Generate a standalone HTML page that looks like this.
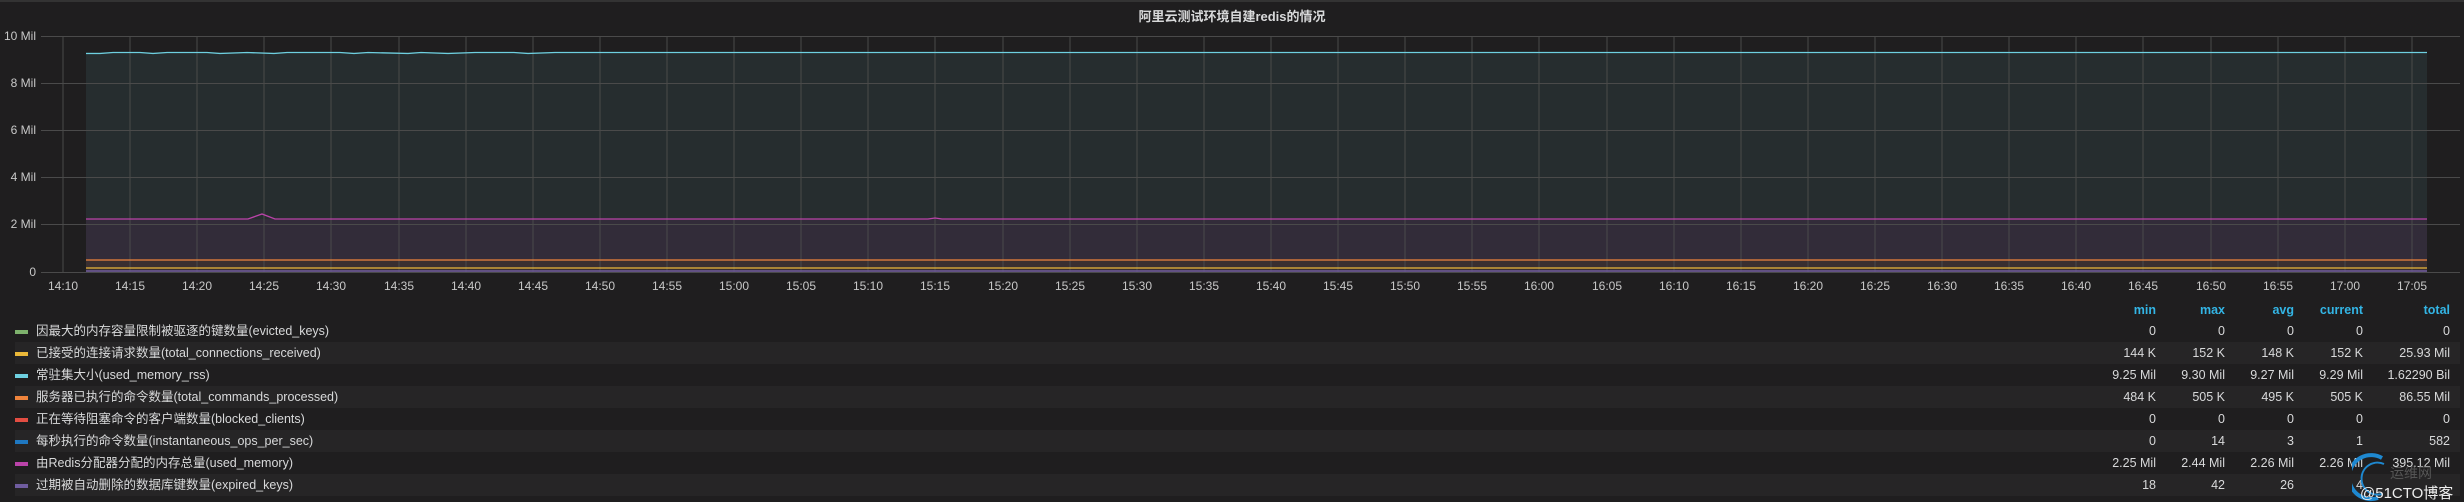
<!DOCTYPE html>
<html><head><meta charset="utf-8">
<style>
html,body{margin:0;padding:0;background:#1f1e1f;}
body{width:2464px;height:502px;overflow:hidden;position:relative;font-family:"Liberation Sans","Noto Sans CJK SC",sans-serif;color:#d8d9da;}
.top{position:absolute;left:0;top:0;width:2464px;height:2px;background:#333;}
.title{position:absolute;left:0;width:2464px;top:6px;text-align:center;font-size:13px;font-weight:bold;color:#d8d9da;}
.row{position:absolute;left:15px;width:2445px;height:22px;font-size:12.5px;line-height:22px;}
.row.s{background:#262526;}
.sw{position:absolute;left:0;top:10px;width:13px;height:4px;}
.lbl{position:absolute;left:21px;top:0;white-space:nowrap;}
.v{position:absolute;top:0;text-align:right;width:100px;white-space:nowrap;}
.c1{left:2041px}.c2{left:2110px}.c3{left:2179px}.c4{left:2248px}.c5{left:2335px}
.hd{position:absolute;top:300px;height:20px;font-size:12.5px;font-weight:bold;color:#33b5e5;line-height:20px;}
</style></head><body>
<div class="top"></div>
<div class="title">阿里云测试环境自建redis的情况</div>
<svg width="2464" height="300" style="position:absolute;left:0;top:0" xmlns="http://www.w3.org/2000/svg">
<rect x="86" y="52" width="2341" height="220" fill="#262d2f"/>
<rect x="86" y="219" width="2341" height="53" fill="#322c39"/>
<rect x="86" y="260" width="2341" height="12" fill="#3a2f30"/>
<g stroke="#4a4a4a" stroke-width="1">
<line x1="41" y1="36.5" x2="2460" y2="36.5"/><line x1="41" y1="83.5" x2="2460" y2="83.5"/>
<line x1="41" y1="130.5" x2="2460" y2="130.5"/><line x1="41" y1="177.5" x2="2460" y2="177.5"/>
<line x1="41" y1="224.5" x2="2460" y2="224.5"/><line x1="41" y1="272.5" x2="2460" y2="272.5"/>
<line x1="63" y1="36" x2="63" y2="272"/><line x1="130" y1="36" x2="130" y2="272"/><line x1="197" y1="36" x2="197" y2="272"/><line x1="264" y1="36" x2="264" y2="272"/><line x1="331" y1="36" x2="331" y2="272"/><line x1="399" y1="36" x2="399" y2="272"/><line x1="466" y1="36" x2="466" y2="272"/><line x1="533" y1="36" x2="533" y2="272"/><line x1="600" y1="36" x2="600" y2="272"/><line x1="667" y1="36" x2="667" y2="272"/><line x1="734" y1="36" x2="734" y2="272"/><line x1="801" y1="36" x2="801" y2="272"/><line x1="868" y1="36" x2="868" y2="272"/><line x1="935" y1="36" x2="935" y2="272"/><line x1="1003" y1="36" x2="1003" y2="272"/><line x1="1070" y1="36" x2="1070" y2="272"/><line x1="1137" y1="36" x2="1137" y2="272"/><line x1="1204" y1="36" x2="1204" y2="272"/><line x1="1271" y1="36" x2="1271" y2="272"/><line x1="1338" y1="36" x2="1338" y2="272"/><line x1="1405" y1="36" x2="1405" y2="272"/><line x1="1472" y1="36" x2="1472" y2="272"/><line x1="1539" y1="36" x2="1539" y2="272"/><line x1="1607" y1="36" x2="1607" y2="272"/><line x1="1674" y1="36" x2="1674" y2="272"/><line x1="1741" y1="36" x2="1741" y2="272"/><line x1="1808" y1="36" x2="1808" y2="272"/><line x1="1875" y1="36" x2="1875" y2="272"/><line x1="1942" y1="36" x2="1942" y2="272"/><line x1="2009" y1="36" x2="2009" y2="272"/><line x1="2076" y1="36" x2="2076" y2="272"/><line x1="2143" y1="36" x2="2143" y2="272"/><line x1="2211" y1="36" x2="2211" y2="272"/><line x1="2278" y1="36" x2="2278" y2="272"/><line x1="2345" y1="36" x2="2345" y2="272"/><line x1="2412" y1="36" x2="2412" y2="272"/>
</g>
<polyline fill="none" stroke="#6ed0e0" stroke-width="1.3" points="86,53.5 100,53.5 113,52.5 140,52.5 153,53.5 167,52.5 207,52.5 220,53.5 247,52.5 274,53.5 287,52.5 340,52.5 354,53.5 368,52.5 408,53.5 421,52.5 448,53.5 475,52.5 514,52.5 528,53.5 555,52.5 2427,52.5"/>
<polyline fill="none" stroke="#ba43a9" stroke-width="1.3" points="86,219 248,219 262,214 275,219 928,219 935,218 942,219 2427,219"/>
<line x1="86" y1="260" x2="2427" y2="260" stroke="#ef843c" stroke-width="1.3"/>
<line x1="86" y1="268" x2="2427" y2="268" stroke="#eab839" stroke-width="1.3"/>
<line x1="86" y1="271" x2="2427" y2="271" stroke="#705da0" stroke-width="1.5"/>
<g font-family="Liberation Sans, sans-serif" font-size="12" fill="#c8c8c8" text-anchor="end">
<text x="36" y="40">10 Mil</text><text x="36" y="87">8 Mil</text><text x="36" y="134">6 Mil</text><text x="36" y="181">4 Mil</text><text x="36" y="228">2 Mil</text><text x="36" y="276">0</text>
</g>
<g font-family="Liberation Sans, sans-serif" font-size="12" fill="#c8c8c8" text-anchor="middle">
<text x="63" y="290">14:10</text><text x="130" y="290">14:15</text><text x="197" y="290">14:20</text><text x="264" y="290">14:25</text><text x="331" y="290">14:30</text><text x="399" y="290">14:35</text><text x="466" y="290">14:40</text><text x="533" y="290">14:45</text><text x="600" y="290">14:50</text><text x="667" y="290">14:55</text><text x="734" y="290">15:00</text><text x="801" y="290">15:05</text><text x="868" y="290">15:10</text><text x="935" y="290">15:15</text><text x="1003" y="290">15:20</text><text x="1070" y="290">15:25</text><text x="1137" y="290">15:30</text><text x="1204" y="290">15:35</text><text x="1271" y="290">15:40</text><text x="1338" y="290">15:45</text><text x="1405" y="290">15:50</text><text x="1472" y="290">15:55</text><text x="1539" y="290">16:00</text><text x="1607" y="290">16:05</text><text x="1674" y="290">16:10</text><text x="1741" y="290">16:15</text><text x="1808" y="290">16:20</text><text x="1875" y="290">16:25</text><text x="1942" y="290">16:30</text><text x="2009" y="290">16:35</text><text x="2076" y="290">16:40</text><text x="2143" y="290">16:45</text><text x="2211" y="290">16:50</text><text x="2278" y="290">16:55</text><text x="2345" y="290">17:00</text><text x="2412" y="290">17:05</text>
</g>
</svg>
<div class="hd" style="left:2056px;width:100px;text-align:right">min</div>
<div class="hd" style="left:2125px;width:100px;text-align:right">max</div>
<div class="hd" style="left:2194px;width:100px;text-align:right">avg</div>
<div class="hd" style="left:2263px;width:100px;text-align:right">current</div>
<div class="hd" style="left:2350px;width:100px;text-align:right">total</div>

<div class="row" style="top:320px"><div class="sw" style="background:#7eb26d"></div><div class="lbl">因最大的内存容量限制被驱逐的键数量(evicted_keys)</div><div class="v c1">0</div><div class="v c2">0</div><div class="v c3">0</div><div class="v c4">0</div><div class="v c5">0</div></div>
<div class="row s" style="top:342px"><div class="sw" style="background:#eab839"></div><div class="lbl">已接受的连接请求数量(total_connections_received)</div><div class="v c1">144 K</div><div class="v c2">152 K</div><div class="v c3">148 K</div><div class="v c4">152 K</div><div class="v c5">25.93 Mil</div></div>
<div class="row" style="top:364px"><div class="sw" style="background:#6ed0e0"></div><div class="lbl">常驻集大小(used_memory_rss)</div><div class="v c1">9.25 Mil</div><div class="v c2">9.30 Mil</div><div class="v c3">9.27 Mil</div><div class="v c4">9.29 Mil</div><div class="v c5">1.62290 Bil</div></div>
<div class="row s" style="top:386px"><div class="sw" style="background:#ef843c"></div><div class="lbl">服务器已执行的命令数量(total_commands_processed)</div><div class="v c1">484 K</div><div class="v c2">505 K</div><div class="v c3">495 K</div><div class="v c4">505 K</div><div class="v c5">86.55 Mil</div></div>
<div class="row" style="top:408px"><div class="sw" style="background:#e24d42"></div><div class="lbl">正在等待阻塞命令的客户端数量(blocked_clients)</div><div class="v c1">0</div><div class="v c2">0</div><div class="v c3">0</div><div class="v c4">0</div><div class="v c5">0</div></div>
<div class="row s" style="top:430px"><div class="sw" style="background:#1f78c1"></div><div class="lbl">每秒执行的命令数量(instantaneous_ops_per_sec)</div><div class="v c1">0</div><div class="v c2">14</div><div class="v c3">3</div><div class="v c4">1</div><div class="v c5">582</div></div>
<div class="row" style="top:452px"><div class="sw" style="background:#ba43a9"></div><div class="lbl">由Redis分配器分配的内存总量(used_memory)</div><div class="v c1">2.25 Mil</div><div class="v c2">2.44 Mil</div><div class="v c3">2.26 Mil</div><div class="v c4">2.26 Mil</div><div class="v c5">395.12 Mil</div></div>
<div class="row s" style="top:474px"><div class="sw" style="background:#705da0"></div><div class="lbl">过期被自动删除的数据库键数量(expired_keys)</div><div class="v c1">18</div><div class="v c2">42</div><div class="v c3">26</div><div class="v c4">4</div><div class="v c5"></div></div>

<svg width="110" height="50" style="position:absolute;left:2352px;top:452px" xmlns="http://www.w3.org/2000/svg">
<path d="M30 6 A22 22 0 1 0 26 46" fill="none" stroke="#1e88d0" stroke-width="4"/>
<path d="M32 12 A16 16 0 1 0 30 42" fill="none" stroke="#1e88d0" stroke-width="2"/>
<text x="38" y="26" font-family="Noto Sans CJK SC, sans-serif" font-size="14" fill="#555">运维网</text>
<text x="8" y="46" font-family="Liberation Sans, Noto Sans CJK SC, sans-serif" font-size="15" fill="#eee">@51CTO博客</text>
</svg>
</body></html>
